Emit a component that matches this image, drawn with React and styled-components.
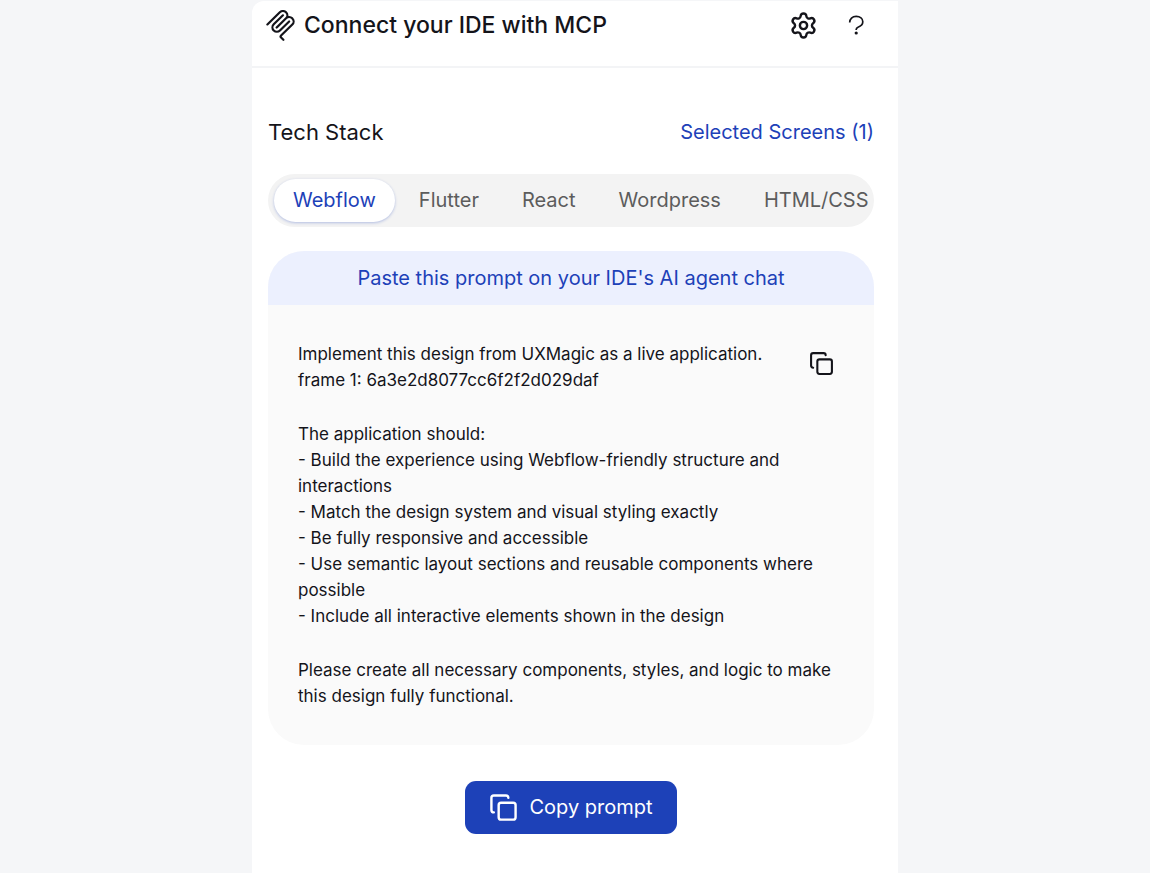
import React, { useState } from 'react';
import styled, { createGlobalStyle } from 'styled-components';
import { Settings, Copy } from 'lucide-react';

const STACKS = ['Webflow', 'Flutter', 'React', 'Wordpress', 'HTML/CSS'];

const PROMPT = [
  ['Implement this design from UXMagic as a live application.', 'frame 1: 6a3e2d8077cc6f2f2d029daf'],
  [
    'The application should:',
    '- Build the experience using Webflow-friendly structure and interactions',
    '- Match the design system and visual styling exactly',
    '- Be fully responsive and accessible',
    '- Use semantic layout sections and reusable components where possible',
    '- Include all interactive elements shown in the design',
  ],
  ['Please create all necessary components, styles, and logic to make this design fully functional.'],
];

const GlobalStyle = createGlobalStyle`
  * {
    box-sizing: border-box;
  }

  body {
    margin: 0;
    background: #f5f6f8;
    color: #14141a;
    font-family: Inter, "Liberation Sans", sans-serif;
  }

  button {
    font-family: inherit;
    border: none;
    cursor: pointer;
  }
`;

const Page = styled.div`
  min-height: 100vh;
  padding: 1px 16px;
  display: flex;
  justify-content: center;
`;

const Panel = styled.main`
  width: 100%;
  max-width: 646px;
  background: #fff;
  border-top-left-radius: 12px;
`;

const Header = styled.header`
  display: flex;
  justify-content: space-between;
  align-items: center;
  padding: 8px 32px 25px 13px;
  border-bottom: 2px solid #f3f4f6;
`;

const Title = styled.h1`
  margin: 0;
  display: flex;
  align-items: center;
  gap: 8px;
  font-size: 23px;
  line-height: 32px;
  font-weight: 500;
`;

const HeaderActions = styled.div`
  display: flex;
  align-items: center;
  gap: 28px;
`;

const IconButton = styled.button`
  background: none;
  padding: 0;
  display: flex;
  color: #14141a;
`;

const Content = styled.div`
  padding: 47px 24px 39px 16px;
`;

const SectionHeader = styled.div`
  display: flex;
  justify-content: space-between;
  align-items: center;
  margin-bottom: 25px;
`;

const SectionTitle = styled.h2`
  margin: 0;
  font-size: 22px;
  line-height: 34px;
  font-weight: 400;
`;

const ScreensLink = styled.a`
  color: #1d41b8;
  font-size: 20px;
  text-decoration: none;
`;

const Tabs = styled.div`
  display: flex;
  gap: 5px;
  padding: 5px 6px;
  margin-bottom: 24px;
  background: #f3f3f3;
  border-radius: 27px;
  overflow: hidden;
`;

const Tab = styled.button`
  flex: none;
  padding: 0 19px;
  font-size: 20px;
  line-height: 43px;
  border-radius: 22px;
  color: ${props => (props.$active ? '#1d41b8' : '#5c5c5c')};
  background: ${props => (props.$active ? '#fff' : 'transparent')};
  box-shadow: ${props => (props.$active ? '0 1px 3px rgba(29, 65, 184, 0.3)' : 'none')};
`;

const Card = styled.section`
  background: #fafafa;
  border-radius: 36px;
  overflow: hidden;
  margin-bottom: 36px;
`;

const CardHeader = styled.div`
  background: #ecf0fe;
  color: #1d41b8;
  text-align: center;
  font-size: 20px;
  line-height: 54px;
`;

const CardBody = styled.div`
  position: relative;
  padding: 36px 30px;
`;

const PromptText = styled.div`
  display: flex;
  flex-direction: column;
  gap: 28px;
  font-size: 17px;
  line-height: 26px;
`;

const Paragraph = styled.p`
  margin: 0;
  white-space: pre-line;
`;

/* floats over the top right corner of the prompt */
const CopyIconButton = styled(IconButton)`
  position: absolute;
  top: 46px;
  right: 40px;
`;

const Footer = styled.div`
  display: flex;
  justify-content: center;
`;

const CopyButton = styled.button`
  display: flex;
  align-items: center;
  gap: 11px;
  padding: 0 24px;
  background: #1d41b8;
  color: #fff;
  font-size: 20px;
  line-height: 53px;
  border-radius: 11px;
`;

const McpLogo = () => (
  <svg width="31" height="31" viewBox="0 0 24 24" fill="currentColor" fillRule="evenodd" aria-hidden="true">
    <path d="M15.688 2.343a2.588 2.588 0 00-3.61 0l-9.626 9.44a.863.863 0 01-1.203 0 .823.823 0 010-1.18l9.626-9.44a4.313 4.313 0 016.016 0 4.116 4.116 0 011.204 3.54 4.3 4.3 0 013.609 1.18l.05.05a4.115 4.115 0 010 5.9l-8.706 8.537a.274.274 0 000 .393l1.788 1.754a.823.823 0 010 1.18.863.863 0 01-1.203 0l-1.788-1.753a1.92 1.92 0 010-2.754l8.706-8.538a2.47 2.47 0 000-3.54l-.05-.049a2.588 2.588 0 00-3.607-.003l-7.172 7.034-.002.002-.098.097a.863.863 0 01-1.204 0 .823.823 0 010-1.18l7.273-7.133a2.47 2.47 0 00-.003-3.537z" />
    <path d="M14.485 4.703a.823.823 0 000-1.18.863.863 0 00-1.204 0l-7.119 6.982a4.115 4.115 0 000 5.9 4.314 4.314 0 006.016 0l7.12-6.982a.823.823 0 000-1.18.863.863 0 00-1.204 0l-7.119 6.982a2.588 2.588 0 01-3.61 0 2.47 2.47 0 010-3.54l7.12-6.982z" />
  </svg>
);

const HelpIcon = () => (
  <svg width="20" height="24" viewBox="0 0 20 24" fill="none" stroke="currentColor" strokeWidth="1.7" aria-hidden="true">
    <path d="M3.700 9.400C3.700 5.900 6.300 3.400 10.200 3.400s6.600 2.200 6.600 5.400c0 3.300-2.800 4.700-4.800 5.400-1.200.5-1.800 1.100-1.800 2.300v.4" />
    <circle cx="10.200" cy="20" r="1.600" fill="currentColor" stroke="none" />
  </svg>
);

function App() {
  const [stack, setStack] = useState('Webflow');

  const copyPrompt = () => {
    const text = PROMPT.map(lines => lines.join('\n')).join('\n\n');
    navigator.clipboard.writeText(text);
  };

  return (
    <>
      <GlobalStyle />
      <Page>
        <Panel>
          <Header>
            <Title>
              <McpLogo />
              Connect your IDE with MCP
            </Title>
            <HeaderActions>
              <IconButton aria-label="Settings">
                <Settings size={29} strokeWidth={2} />
              </IconButton>
              <IconButton aria-label="Help">
                <HelpIcon />
              </IconButton>
            </HeaderActions>
          </Header>

          <Content>
            <SectionHeader>
              <SectionTitle>Tech Stack</SectionTitle>
              <ScreensLink href="#screens">Selected Screens (1)</ScreensLink>
            </SectionHeader>

            <Tabs role="tablist">
              {STACKS.map(name => (
                <Tab
                  key={name}
                  role="tab"
                  aria-selected={name === stack}
                  $active={name === stack}
                  onClick={() => setStack(name)}
                >
                  {name}
                </Tab>
              ))}
            </Tabs>

            <Card>
              <CardHeader>Paste this prompt on your IDE's AI agent chat</CardHeader>
              <CardBody>
                <PromptText>
                  {PROMPT.map(lines => (
                    <Paragraph key={lines[0]}>{lines.join('\n')}</Paragraph>
                  ))}
                </PromptText>
                <CopyIconButton aria-label="Copy" onClick={copyPrompt}>
                  <Copy size={25} strokeWidth={2} />
                </CopyIconButton>
              </CardBody>
            </Card>

            <Footer>
              <CopyButton onClick={copyPrompt}>
                <Copy size={29} strokeWidth={2} />
                Copy prompt
              </CopyButton>
            </Footer>
          </Content>
        </Panel>
      </Page>
    </>
  );
}

export default App;
